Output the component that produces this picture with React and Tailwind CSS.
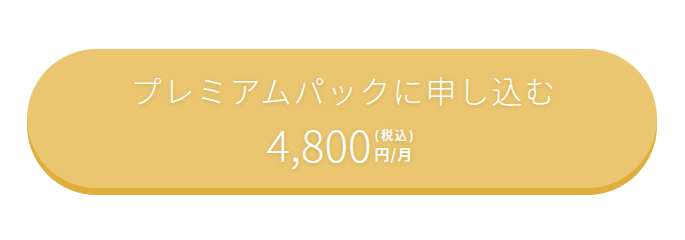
export default function App() {
    return (
        <div className="w-[685px] h-[233px] bg-white pt-[49px] pl-[27px]">
            <button
                type="button"
                className="w-[630px] h-[139px] rounded-full bg-[#ebc670] shadow-[0_7px_0_#e0ae3c] flex flex-col items-center justify-center text-white font-['Noto_Sans_CJK_JP',sans-serif] [text-shadow:0_1px_4px_rgba(120,80,0,0.25)]"
            >
                {/* title */}
                <span className="text-[31px] font-light leading-none tracking-[2px] pl-[4px] mt-[1px]">
                    プレミアムパックに申し込む
                </span>

                {/* price */}
                <span className="flex items-end mt-[16px] pr-[2px]">
                    <span className="text-[44px] font-light leading-none">
                        4,800
                    </span>
                    <span className="flex flex-col items-start ml-[3px] mb-[4px]">
                        <span className="text-[12px] font-bold leading-[12px] tracking-[2px] mb-[5px]">(税込)</span>
                        <span className="text-[15px] font-bold leading-[15px] tracking-[1px]">円/月</span>
                    </span>
                </span>
            </button>
        </div>
    )
}
